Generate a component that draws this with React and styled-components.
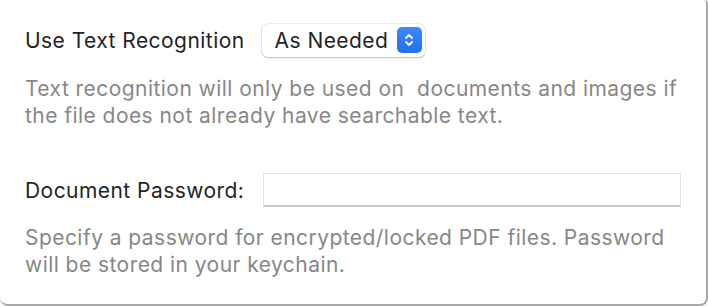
import React from "react";
import styled, { createGlobalStyle } from "styled-components";

const GlobalStyle = createGlobalStyle`
  html, body {
    margin: 0;
    padding: 0;
    background: #ffffff;
  }
  body {
    font-family: "Inter", "Noto Sans", sans-serif;
    -webkit-font-smoothing: antialiased;
  }
`;

const Panel = styled.div`
  box-sizing: border-box;
  width: 708px;
  height: 306px;
  background: #ffffff;
  border-right: 2px solid #a9a9a9;
  border-bottom: 2px solid #a9a9a9;
  border-radius: 0 4px 8px 8px;
  padding: 23px 0 0 25px;
  display: flex;
  flex-direction: column;
`;

const Row = styled.div`
  display: flex;
  align-items: center;
  gap: ${(p) => p.$gap || 0}px;
  height: 34px;
  margin-top: ${(p) => p.$top || 0}px;
`;

const Label = styled.span`
  font-size: 21px;
  color: #242424;
  letter-spacing: 0.45px;
  width: ${(p) => (p.$width ? `${p.$width}px` : "auto")};
  white-space: nowrap;
`;

const Popup = styled.div`
  box-sizing: border-box;
  display: flex;
  align-items: center;
  justify-content: space-between;
  width: 163px;
  height: 33px;
  padding: 0 3px 0 13px;
  background: #ffffff;
  border-radius: 6px;
  box-shadow: 0 0 0 0.5px rgba(0, 0, 0, 0.12), 0 1px 2px rgba(0, 0, 0, 0.22);
  font-size: 21px;
  letter-spacing: 0.45px;
  color: #242424;
`;

const Stepper = styled.div`
  width: 25px;
  height: 26px;
  border-radius: 5px;
  background: linear-gradient(#3d8af7, #2270ee);
  display: flex;
  align-items: center;
  justify-content: center;
`;

const Help = styled.p`
  margin: ${(p) => p.$top || 0}px 0 0 0;
  font-size: 21px;
  line-height: 27px;
  color: #878787;
  letter-spacing: 0.45px;
  max-width: 675px;
`;

const Field = styled.input`
  box-sizing: border-box;
  width: 418px;
  height: 34px;
  border: 1px solid #e2e2e2;
  border-bottom: 2px solid #c8c8c8;
  background: #ffffff;
  outline: none;
  padding: 0 6px;
  font-size: 16px;
`;

function StepperIcon() {
  return (
    <svg width="12" height="16" viewBox="0 0 12 16" fill="none">
      <path d="M3 6 L6 3 L9 6" stroke="#fff" strokeWidth="1.8" strokeLinecap="round" strokeLinejoin="round" />
      <path d="M3 10 L6 13 L9 10" stroke="#fff" strokeWidth="1.8" strokeLinecap="round" strokeLinejoin="round" />
    </svg>
  );
}

export default function App() {
  return (
    <>
      <GlobalStyle />
      <Panel>
        <Row $gap={17}>
          <Label>Use Text Recognition</Label>
          <Popup>
            <span>As Needed</span>
            <Stepper>
              <StepperIcon />
            </Stepper>
          </Popup>
        </Row>
        <Help $top={18}>
          Text recognition will only be used on&nbsp; documents and images if
          the file does not already have searchable text.
        </Help>
        <Row $top={44}>
          <Label $width={238}>Document Password:</Label>
          <Field type="password" />
        </Row>
        <Help $top={17}>
          Specify a password for encrypted/locked PDF files. Password will be
          stored in your keychain.
        </Help>
      </Panel>
    </>
  );
}
